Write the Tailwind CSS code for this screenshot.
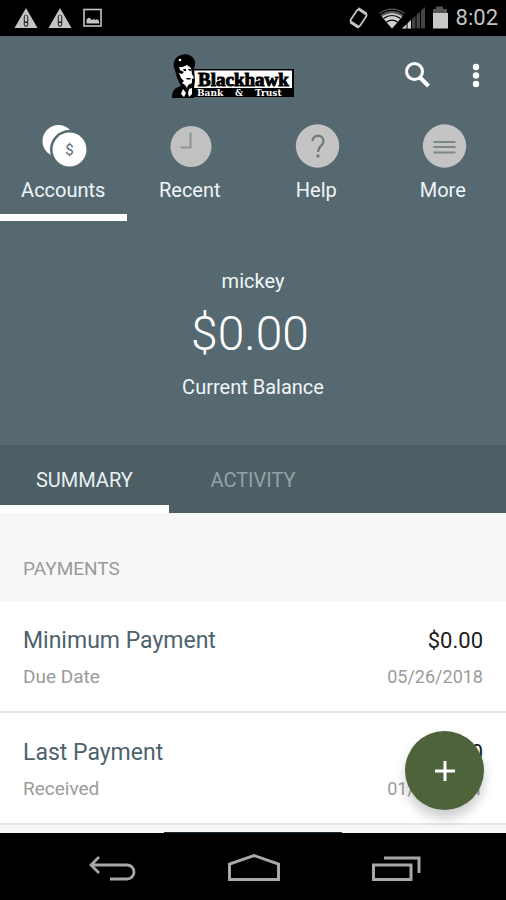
<!DOCTYPE html>
<html lang="en">
<head>
<meta charset="utf-8">
<meta name="viewport" content="width=device-width, initial-scale=1">
<title>Blackhawk Bank &amp; Trust</title>
<script src="https://cdn.jsdelivr.net/npm/@tailwindcss/browser@4"></script>
</head>
<body class="relative flex h-dvh flex-col overflow-hidden bg-black font-['Roboto',sans-serif]">

<div class="flex h-9 shrink-0 items-center justify-between bg-black pr-2 pl-3.5 text-[#c4c4c4]">
  <div class="flex items-center gap-2.5">
    <svg class="h-6 w-6" viewBox="0 0 24 24" aria-hidden="true"><path fill="currentColor" d="M12 2 23.500 22H.5Z"/><path stroke="#222" stroke-width="4.500" stroke-linecap="round" d="M12 11v7.500"/><path stroke="#c4c4c4" stroke-width="2.400" d="M12 9.500v6M12 17v2.500"/></svg>
    <svg class="h-6 w-6" viewBox="0 0 24 24" aria-hidden="true"><path fill="currentColor" d="M12 2 23.500 22H.5Z"/><path stroke="#222" stroke-width="4.500" stroke-linecap="round" d="M12 11v7.500"/><path stroke="#c4c4c4" stroke-width="2.400" d="M12 9.500v6M12 17v2.500"/></svg>
    <svg class="h-5 w-5" viewBox="0 0 20 20" aria-hidden="true"><rect x="2" y="1.500" width="17" height="16.500" fill="none" stroke="currentColor" stroke-width="1.600"/><path fill="currentColor" d="M4.500 15.500v-4l2.500-2 3 2.500 1.500-1 2 1 1.500-1 2 2v2.500Z"/></svg>
  </div>
  <div class="flex items-center">
    <svg class="mr-2 h-6 w-6" viewBox="0 0 24 24" fill="none" stroke="currentColor" aria-hidden="true"><rect x="7" y="4.500" width="11" height="15" rx="2" transform="rotate(34 12.500 12)" stroke-width="1.800"/><path stroke-width="3" d="m12 2.500 8.500 5.500M4.500 16l8.500 5.500"/></svg>
    <svg class="h-6 w-12" viewBox="0 0 48 24" aria-hidden="true"><path fill="#555" d="M1 7.500C8 .8 20 .8 27 7.500L14 22.500Z"/><path fill="#d0d0d0" d="M4 11c6-5 14-5 20 0L14 22.500Z"/><path fill="none" stroke="#000" stroke-width="1.200" d="M2 8.800c7-6 17-6 24 0M5.500 12.500c5-4 12-4 17 0M8.500 16c3.500-2.500 7.500-2.500 11 0"/><path fill="#444" d="M24 22.500 47 1v21.500Z"/><path fill="#d0d0d0" d="M24 22.500 33 14v8.500Z"/><path stroke="#000" stroke-width="1" d="M29 16v7M33.500 12v11M38 8v15M42.500 4v19"/></svg>
    <svg class="ml-1 h-6 w-5" viewBox="0 0 20 24" aria-hidden="true"><path fill="#555" d="M3 3h3V.5h7V3h4v4H3Z"/><path fill="#c8c8c8" d="M3 7h15v15.500H3Z"/></svg>
    <span class="ml-1 w-11 text-right text-[22px] leading-9">8:02</span>
  </div>
</div>

<header class="shrink-0 bg-[#566970] text-white">
  <div class="relative flex h-20 items-center justify-center">
    <svg class="mr-10 h-11 w-31" viewBox="0 0 124 44" role="img" aria-label="Blackhawk Bank &amp; Trust">
      <rect x="13" y="15" width="110" height="28" fill="#000"/>
      <rect x="20" y="16.500" width="101" height="17.500" fill="#fff"/>
      <path fill="#000" d="M1 44c0-7 2-10 9-12l-4-8-2-8C1 11 3 4 8 2c5-3 12-2 15 3 2 4 1 7 0 9l1 13-1 7v10Z"/>
      <path fill="#fff" d="M8 13c3 1 5-1 8-2l4 3 1 6 2 4-2 1v4l-4 2-1 3-2-3-3-2 2-2-3-3-2-5 3 1 2-2-4-2Z"/>
      <path fill="#000" d="m12 15 3 0 0 2-2 0ZM17 15l3 0v2l-2-.5ZM15 24l5 0-1 1.500-3 0Z"/>
      <path fill="#fff" d="M12 35l3 4-2 4-3-3Zm6 0 3-1v6l-3 3-1-4Z"/>
      <circle cx="9" cy="6" r="1.300" fill="#fff"/>
      <text x="27" y="31.500" font-family="'Liberation Serif',serif" font-weight="700" font-size="19" stroke="#000" stroke-width="1">Blackhawk</text>
      <g fill="#fff" font-family="'DejaVu Serif',serif" font-weight="700" font-size="9"><text x="26" y="42">Bank</text><text x="64" y="42">&amp;</text><text x="84" y="42">Trust</text></g>
    </svg>
    <div class="absolute inset-y-0 right-0 flex items-center">
      <button aria-label="Search" class="flex h-12 w-15 items-center justify-center"><svg class="h-8 w-8" viewBox="0 0 32 32" fill="none" stroke="#fff" stroke-width="3" aria-hidden="true"><circle cx="14.500" cy="11.500" r="8"/><path stroke-width="4" d="m20 17.500 8.500 8.500"/></svg></button>
      <button aria-label="More options" class="flex h-12 w-15 items-center justify-center"><svg class="h-8 w-8" viewBox="0 0 32 32" fill="#fff" aria-hidden="true"><circle cx="16" cy="7" r="3.200"/><circle cx="16" cy="15.500" r="3.200"/><circle cx="16" cy="24" r="3.200"/></svg></button>
    </div>
  </div>

  <nav class="grid grid-cols-4 text-center text-[20px] leading-6 text-[#f0f5f8]">
    <a href="#accounts" aria-current="page" class="flex flex-col items-center border-b-[7px] border-white pt-2 pb-3">
      <svg class="mb-2.5 h-11 w-12" viewBox="0 0 48 44" aria-hidden="true"><circle cx="19.500" cy="17" r="16" fill="#fff"/><circle cx="30.500" cy="25.500" r="19.500" fill="#566970"/><circle cx="30.500" cy="25.500" r="17" fill="#fff"/><text x="30.500" y="31" text-anchor="middle" font-size="15" fill="#566970">$</text></svg>
      Accounts</a>
    <a href="#recent" class="flex flex-col items-center border-b-[7px] border-transparent pt-2 pb-3">
      <svg class="mb-2.5 h-11 w-12" viewBox="0 0 48 44" aria-hidden="true"><circle cx="25" cy="22.500" r="20.500" fill="#c1c1c1"/><path fill="none" stroke="#8f9393" stroke-width="2" d="M24.500 8.500v15h-10"/></svg>
      Recent</a>
    <a href="#help" class="flex flex-col items-center border-b-[7px] border-transparent pt-2 pb-3">
      <svg class="mb-2.5 h-11 w-12" viewBox="0 0 48 44" aria-hidden="true"><circle cx="25.500" cy="22" r="21.700" fill="#c5c4c4"/><path fill="none" stroke="#6f7c80" stroke-width="2.400" d="M20.500 17c0-7 11-7 11 0 0 5-5.500 5-5.500 11"/><circle cx="26" cy="32" r="1.700" fill="#6f7c80"/></svg>
      Help</a>
    <a href="#more" class="flex flex-col items-center border-b-[7px] border-transparent pt-2 pb-3">
      <svg class="mb-2.5 h-11 w-12" viewBox="0 0 48 44" aria-hidden="true"><circle cx="25.500" cy="22" r="21.700" fill="#c5c4c4"/><path stroke="#7c878a" stroke-width="1.800" d="M14.500 18h22M14.500 23h22M14.500 28.500h22"/></svg>
      More</a>
  </nav>

  <section class="flex flex-col items-center pt-12 pb-11.5 text-[20px] leading-6 text-[#f0f5f8]">
    <p>mickey</p>
    <p class="mt-3.5 mb-3.5 pr-1.5 text-[48px] leading-[54px] font-light text-white">$0.00</p>
    <p>Current Balance</p>
  </section>

  <div class="flex h-17 items-stretch bg-[#4d5e65] text-[20px]">
    <button class="w-1/3 border-b-8 border-white pt-2.5 text-[#e8f0f3]">SUMMARY</button>
    <button class="w-1/3 border-b-8 border-transparent pt-2.5 text-[#94a2a8]">ACTIVITY</button>
  </div>
</header>

<main class="min-h-0 flex-1 overflow-hidden bg-[#f7f7f7]">
  <h2 class="px-[23px] pt-11 pb-5 text-[19px] leading-6 text-[#9b9b9b]">PAYMENTS</h2>
  <ul>
    <li class="border-b-2 border-[#e6e6e6] bg-white px-[23px] pt-6 pb-5">
      <div class="flex justify-between text-[23px] leading-8 text-[#4d626b]"><h3>Minimum Payment</h3><span class="text-[22px] text-[#1c1c1c]">$0.00</span></div>
      <div class="mt-1.5 flex justify-between text-[19px] leading-7 text-[#9b9b9b]"><span>Due Date</span><span class="text-[18px]">05/26/2018</span></div>
    </li>
    <li class="border-b-2 border-[#e6e6e6] bg-white px-[23px] pt-6 pb-5">
      <div class="flex justify-between text-[23px] leading-8 text-[#4d626b]"><h3>Last Payment</h3><span class="text-[22px] text-[#1c1c1c]">$0.00</span></div>
      <div class="mt-1.5 flex justify-between text-[19px] leading-7 text-[#9b9b9b]"><span>Received</span><span class="text-[18px]">01/01/0001</span></div>
    </li>
  </ul>
</main>

<button aria-label="Add payment" class="absolute right-[22px] bottom-[90px] flex size-[79px] items-center justify-center rounded-full bg-[#4e633c] shadow-[0_8px_12px_rgba(0,0,0,0.2)]">
  <svg class="h-6 w-6" viewBox="0 0 24 24" stroke="#fff" stroke-width="3" aria-hidden="true"><path d="M12 2v20M2 12h20"/></svg>
</button>

<footer class="relative flex h-[67px] shrink-0 items-center justify-center gap-18 bg-black pt-1">
  <div class="absolute -top-px left-1/2 h-px w-[178px] -translate-x-1/2 bg-[#1f2b36]"></div>
  <button aria-label="Back"><svg class="h-9 w-20" viewBox="0 0 80 36" fill="none" stroke="#a8a8a8" stroke-width="2.800" aria-hidden="true"><path d="M28 6 20 14l8 8M20 14h36a7 7 0 0 1 0 14H39"/></svg></button>
  <button aria-label="Home"><svg class="h-9 w-15" viewBox="0 0 60 36" fill="none" stroke="#a8a8a8" stroke-width="3" aria-hidden="true"><path d="M6.500 28.500V13L31 4.500 55.500 13v15.500Z"/></svg></button>
  <button aria-label="Recent apps"><svg class="h-9 w-20" viewBox="0 0 80 36" fill="none" stroke="#a8a8a8" stroke-width="3" aria-hidden="true"><path d="M18.500 14h37.500v14.500H18.500ZM29 7h35v15"/></svg></button>
</footer>
</body>
</html>
